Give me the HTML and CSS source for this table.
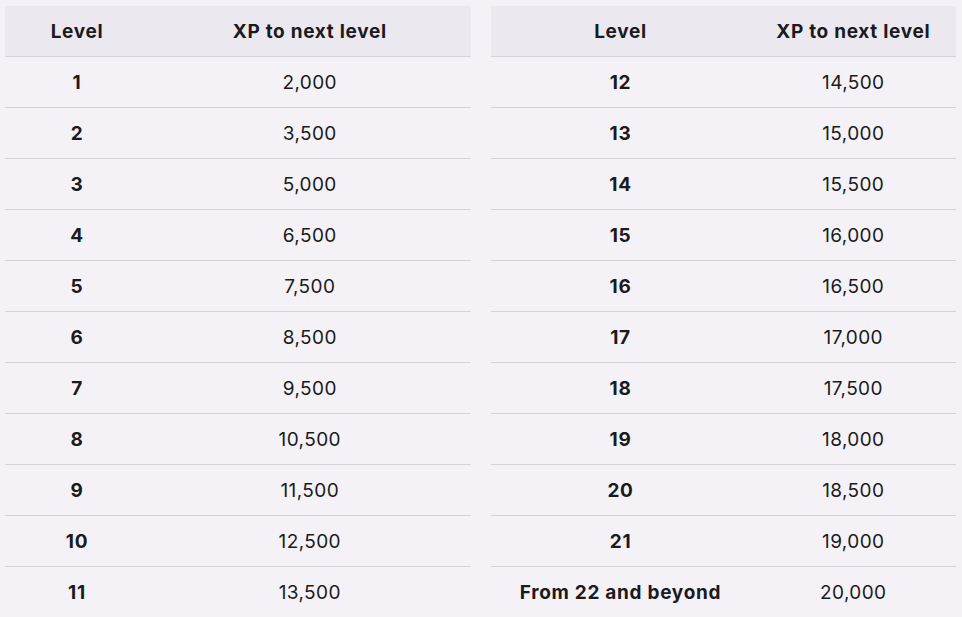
FILE: index.html
```html
<!DOCTYPE html>
<html>
<head>
<meta charset="utf-8">
<link rel="stylesheet" href="styles.css">
</head>
<body>
<div class="wrap">
  <table class="xp">
    <thead><tr><th class="lvl">Level</th><th>XP to next level</th></tr></thead>
    <tbody>
      <tr><td class="lvl">1</td><td>2,000</td></tr>
      <tr><td class="lvl">2</td><td>3,500</td></tr>
      <tr><td class="lvl">3</td><td>5,000</td></tr>
      <tr><td class="lvl">4</td><td>6,500</td></tr>
      <tr><td class="lvl">5</td><td>7,500</td></tr>
      <tr><td class="lvl">6</td><td>8,500</td></tr>
      <tr><td class="lvl">7</td><td>9,500</td></tr>
      <tr><td class="lvl">8</td><td>10,500</td></tr>
      <tr><td class="lvl">9</td><td>11,500</td></tr>
      <tr><td class="lvl">10</td><td>12,500</td></tr>
      <tr class="last"><td class="lvl">11</td><td>13,500</td></tr>
    </tbody>
  </table>
  <table class="xp right">
    <thead><tr><th class="lvl">Level</th><th>XP to next level</th></tr></thead>
    <tbody>
      <tr><td class="lvl">12</td><td>14,500</td></tr>
      <tr><td class="lvl">13</td><td>15,000</td></tr>
      <tr><td class="lvl">14</td><td>15,500</td></tr>
      <tr><td class="lvl">15</td><td>16,000</td></tr>
      <tr><td class="lvl">16</td><td>16,500</td></tr>
      <tr><td class="lvl">17</td><td>17,000</td></tr>
      <tr><td class="lvl">18</td><td>17,500</td></tr>
      <tr><td class="lvl">19</td><td>18,000</td></tr>
      <tr><td class="lvl">20</td><td>18,500</td></tr>
      <tr><td class="lvl">21</td><td>19,000</td></tr>
      <tr class="last"><td class="lvl">From 22 and beyond</td><td>20,000</td></tr>
    </tbody>
  </table>
</div>
</body>
</html>
```

FILE: styles.css
```css
html, body {
  margin: 0;
  padding: 0;
  background: #f4f2f7;
}
body {
  font-family: "Inter", "Noto Sans", sans-serif;
  color: #1b1a1d;
}
.wrap {
  display: flex;
  gap: 20px;
  padding: 6px 6px 0 5px;
}
.xp {
  border-collapse: collapse;
  flex: 1 1 0;
  width: 465px;
}
.xp th, .xp td {
  height: 50px;
  padding: 0 10px;
  text-align: center;
  font-size: 19px;
  border-bottom: 1px solid #d6d2da;
}
.xp th {
  background: #ece8ef;
  font-weight: 700;
  letter-spacing: 0.7px;
}
.xp td {
  font-weight: 400;
  letter-spacing: 0.4px;
}
.xp td.lvl {
  font-weight: 700;
  letter-spacing: 0.7px;
}
.xp th.lvl {
  width: 124px;
}
.right th.lvl {
  width: auto;
  white-space: nowrap;
}
.right td.lvl {
  width: 240px;
}
.xp tr.last td {
  border-bottom: none;
}
```
